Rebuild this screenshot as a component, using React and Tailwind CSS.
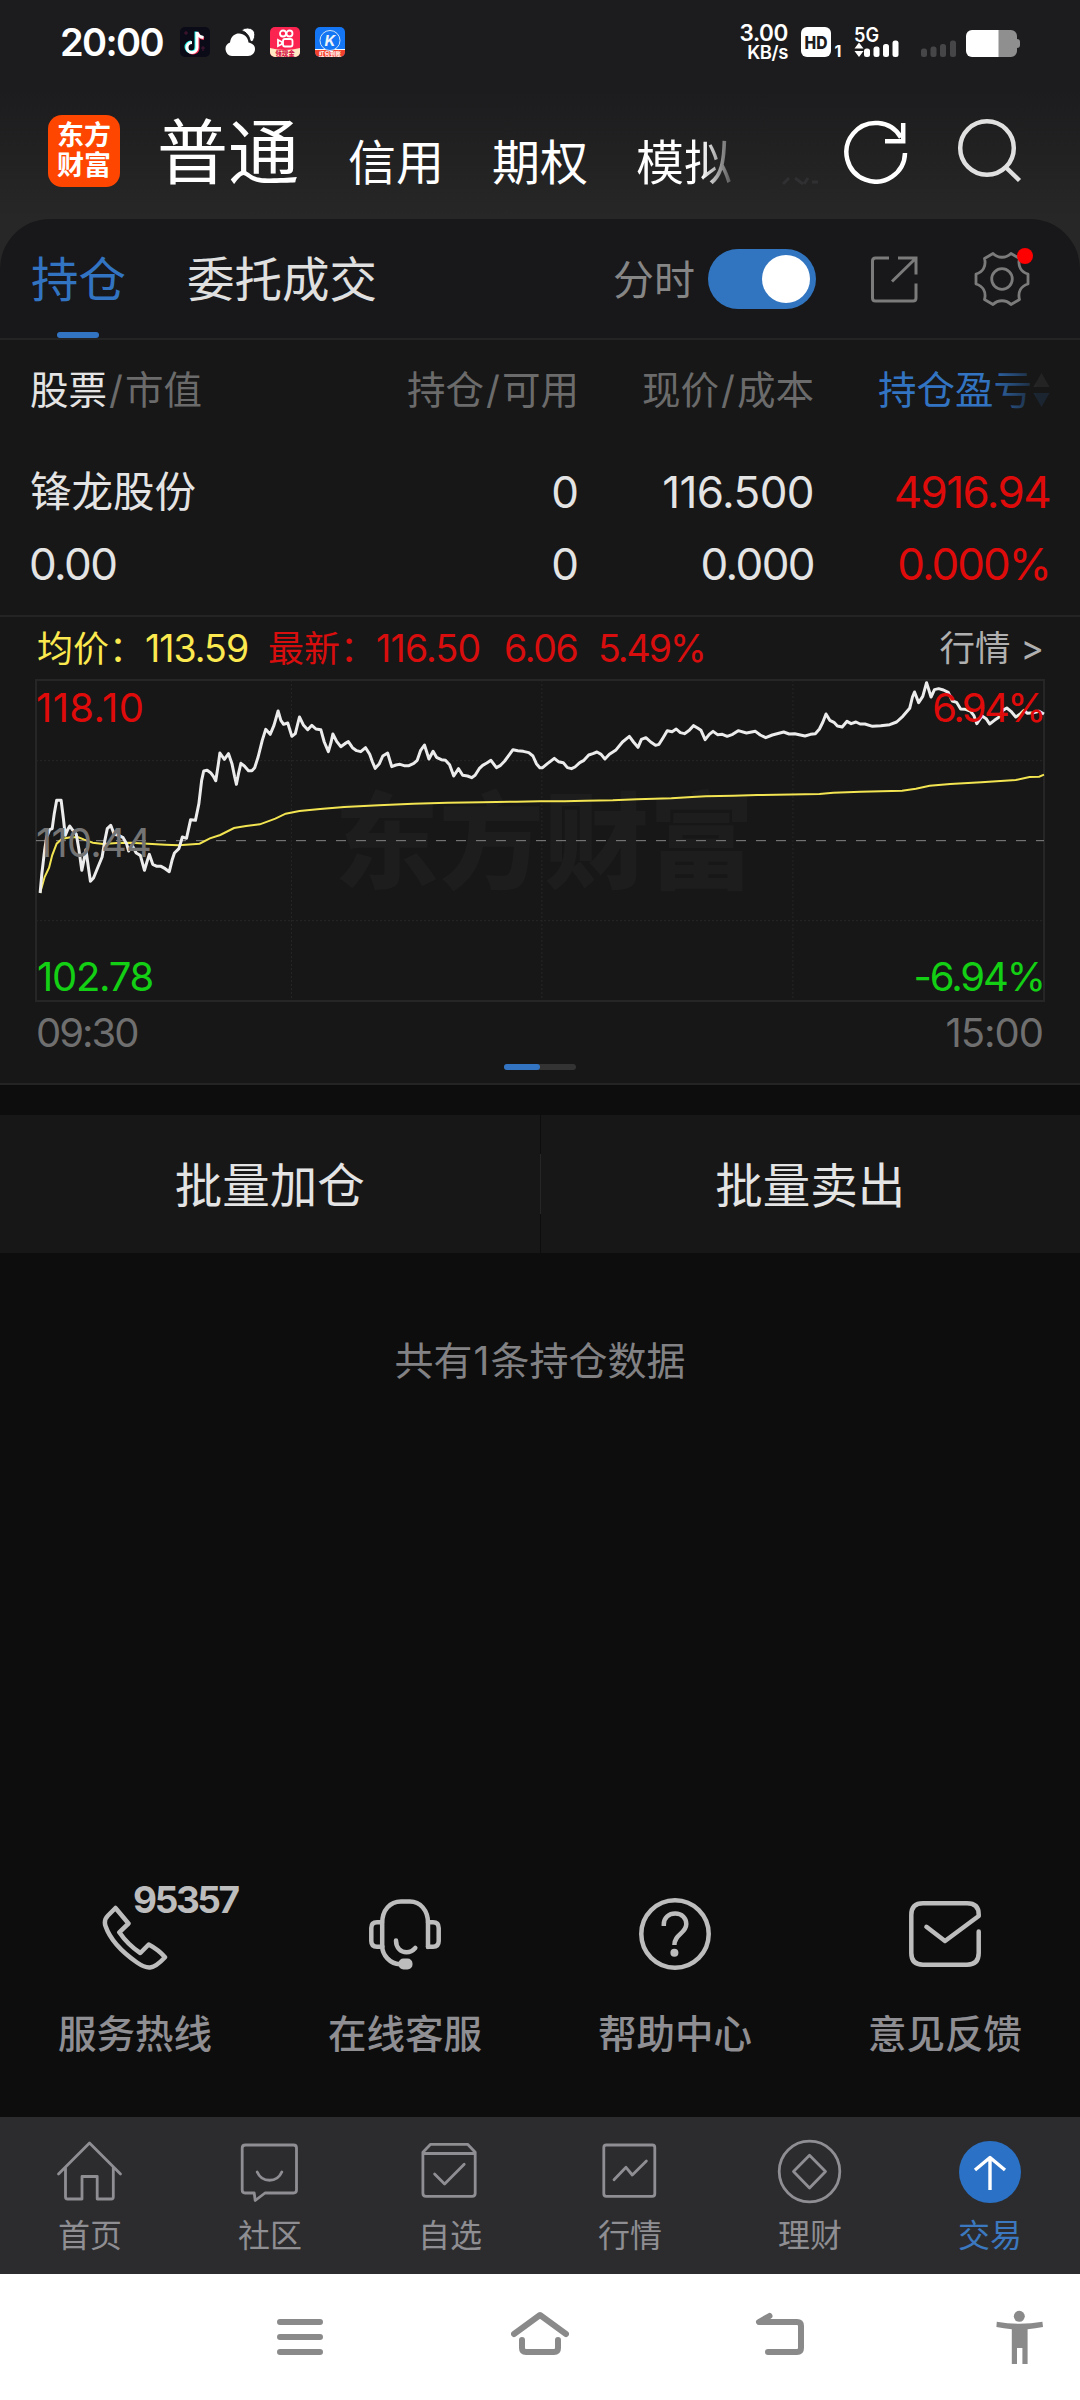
import React from "react";

const PRICE_LINE =
    "117,848 122,790 130,720 136,680 145,658 152,655 158,610 165,570 178,570 184,620 190,675 196,660 203,647 212,660 222,672 230,720 238,780 244,750 250,718 257,770 263,813 272,803 285,770 297,740 305,690 312,655 322,645 332,672 345,675 358,682 368,700 374,722 384,705 396,728 408,735 420,780 427,755 434,732 444,762 456,768 468,768 480,775 492,784 500,750 507,728 520,715 530,680 542,684 554,628 568,630 578,580 586,510 592,482 602,480 612,487 620,498 627,511 634,465 639,428 652,447 664,430 674,460 682,500 687,522 693,490 700,459 710,467 722,481 732,481 740,472 750,440 762,390 772,357 785,372 796,345 808,302 816,330 824,342 836,338 848,378 858,370 870,320 882,345 894,358 906,345 918,356 932,358 942,395 954,424 962,395 967,371 978,393 990,409 1002,400 1012,394 1024,412 1036,421 1048,424 1062,412 1074,432 1082,455 1090,474 1102,460 1112,437 1126,428 1138,469 1150,464 1162,462 1174,466 1188,466 1202,459 1212,450 1222,420 1233,404 1246,446 1258,423 1268,441 1282,448 1294,450 1306,463 1318,497 1332,475 1344,495 1358,497 1370,502 1380,495 1392,475 1402,465 1414,458 1426,450 1442,472 1454,465 1466,452 1478,435 1490,418 1504,421 1520,423 1536,427 1548,437 1558,460 1568,472 1576,472 1590,460 1610,444 1622,454 1636,457 1648,472 1660,475 1670,470 1684,457 1696,450 1710,434 1722,430 1734,425 1746,432 1757,446 1770,432 1788,420 1808,395 1828,378 1840,395 1853,411 1863,387 1876,382 1890,395 1904,405 1914,402 1926,382 1938,361 1952,364 1964,356 1976,367 1988,370 2002,360 2014,346 2026,353 2036,360 2048,388 2060,372 2071,363 2084,373 2098,372 2112,378 2128,372 2144,361 2168,368 2194,363 2208,374 2224,382 2243,374 2276,365 2292,371 2308,370 2338,377 2354,372 2368,370 2380,356 2390,335 2399,311 2410,330 2422,336 2432,347 2446,350 2460,333 2472,340 2486,335 2498,341 2512,341 2534,348 2558,346 2584,343 2604,335 2622,318 2642,294 2650,260 2656,245 2668,277 2680,258 2691,217 2704,260 2714,238 2726,235 2740,239 2754,246 2766,272 2778,276 2790,296 2804,297 2818,302 2828,315 2837,340 2852,317 2864,325 2874,341 2888,330 2902,320 2912,300 2924,293 2936,303 2950,320 2964,310 2974,300 2984,309 3000,307 3018,303 3032,311";

const AVG_LINE =
    "117,848 130,800 143,772 152,735 165,700 180,686 205,681 228,681 245,688 270,697 300,701 340,698 380,697 430,700 480,703 520,705 580,700 610,684 640,674 680,653 715,647 755,642 800,625 830,610 870,602 930,596 1000,590 1100,585 1200,580 1300,577 1400,576 1500,574 1568,573 1640,573 1700,571 1780,570 1850,567 1950,564 2010,560 2050,558 2130,556 2200,554 2380,551 2420,547 2500,544 2620,541 2660,535 2700,526 2760,521 2850,516 2950,509 2990,500 3018,499 3032,493";

const services = [
    {
        label: "服务热线",
        badge: "95357",
        icon: (
            <path d="M16.5 10 L29.5 25.5 L20.3 34.3 Q29 47 41.3 55 L49.7 46.5 Q60 52 66 59.3 Q57 69 51 69.5 Q46 70 38 64.5 Q13 47 6.5 28 Q4.5 22 9 17.5 Z" />
        ),
    },
    {
        label: "在线客服",
        icon: (
            <>
                <path d="M13.2 49 V25 C13.2 12 21 3.5 32 3.5 H41 C51 3.5 59 12 59 25 V49" />
                <path d="M13 24.3 H8 Q2.3 24.3 2.3 30 V43 Q2.3 48.7 8 48.7 H13 M59 24.3 H64 Q69.7 24.3 69.7 30 V43 Q69.7 48.7 64 48.7 H59" />
                <path d="M13.2 48 C13.2 57 21 66 31 66.3 M27 42.5 C27 50 32 54.3 37.5 54.3 Q42.5 54.3 46.3 50" />
                <rect x="29.5" y="60.5" width="14" height="11" rx="5" fill="currentColor" stroke="none" />
            </>
        ),
    },
    {
        label: "帮助中心",
        icon: (
            <>
                <circle cx="36" cy="36" r="33.7" />
                <path strokeLinecap="butt" d="M24.8 28 V26.5 C24.8 19.5 30 15.6 36.2 15.6 C43 15.6 47.3 20 47.3 26 C47.3 35.5 35.4 36 35.4 47" />
                <circle cx="35.4" cy="54.7" r="4" fill="currentColor" stroke="none" />
            </>
        ),
    },
    {
        label: "意见反馈",
        icon: (
            <path d="M17.4 28.8 L36 43 L69.7 18 V16.5 Q69.7 5.3 58 5.3 H14 Q2.3 5.3 2.3 17 V55 Q2.3 66.7 14 66.7 H58 Q69.7 66.7 69.7 55 V33.5" />
        ),
    },
];

const navItems = [
    {
        label: "首页",
        icon: <path d="M0.5 34 L31.5 3 L62.5 34 M7.5 27.5 V57 Q7.5 59 9.5 59 H24 V36.5 H39.2 V59 H53.3 Q55.3 59 55.3 57 V27.5" />,
    },
    {
        label: "社区",
        icon: (
            <path d="M7.5 5 H55.5 Q58.5 5 58.5 8 V50 Q58.5 53 55.5 53 H27 L17.2 60.5 L16.2 53 H7 Q4.2 53 4.2 50 V8 Q4.2 5 7.5 5 Z M19.2 32 C24 43 39 43 43.8 32" />
        ),
    },
    {
        label: "自选",
        icon: (
            <path d="M4.9 12.3 L12.6 4.3 H49.6 L57.2 12.3 V53.3 Q57.2 56.3 54.2 56.3 H7.9 Q4.9 56.3 4.9 53.3 Z M4.9 13.5 H57.2 M16.6 34 L26.6 44 L46.2 24.3" />
        ),
    },
    {
        label: "行情",
        icon: (
            <>
                <rect x="5.8" y="5" width="51" height="51.3" rx="2.5" />
                <path d="M16 39.7 L28 27.3 L34.3 35 L48.4 21" />
            </>
        ),
    },
    {
        label: "理财",
        icon: (
            <>
                <circle cx="31.5" cy="31.5" r="30.3" />
                <path d="M31.5 15.3 L47.5 31.5 L31.5 48 L15.5 31.5 Z" />
            </>
        ),
    },
    {
        label: "交易",
        active: true,
        icon: (
            <>
                <circle cx="32" cy="32" r="31" fill="#2b71c5" stroke="none" />
                <path d="M32 50 V17.5 M17 30 L32 17.5 L47 30" stroke="#fff" strokeWidth="3.4" strokeLinecap="butt" />
            </>
        ),
    },
];

function StatusBar() {
    return (
        <div className="flex h-[84px] items-center pr-[60px] pl-[60px] text-white">
            <span className="w-[120px] text-[38px] leading-none font-semibold tracking-[-1.6px]">20:00</span>
            <div className="flex gap-[15px]">
                {/* Douyin */}
                <svg width="30" height="30" viewBox="0 0 30 30">
                    <rect width="30" height="30" rx="5" fill="#0b0b18" />
                    <path d="M4 6h4M6 4v4M23 19v5M21 21h4" stroke="#4a1630" />
                    <g fill="none" strokeWidth="3">
                        <path d="M16 4.5V20a5 5 0 1 1-5-5M16 5c.7 3.500 3 5 7 5.500" stroke="#25f4ee" />
                        <path d="M18 6v15a5 5 0 0 1-8 4M18 6c.7 3.500 3 5 6 5.500" stroke="#fe2c55" />
                        <path d="M17 5v15.500a5 5 0 1 1-5-5M17 5c.7 3.500 3 5 6.500 5.500" stroke="#fff" />
                    </g>
                </svg>
                {/* Weather */}
                <svg width="30" height="30" viewBox="0 0 30 30" fill="#fff">
                    <path d="M7 29a7 7 0 0 1-2-13.500C6 9 10 6.500 14 6.500c5 0 9 3.500 9.500 9 3 .5 6.500 2.500 6.500 6.500 0 4-3 7-7 7z" />
                    <path d="M16.500 3.500C20 0 25 .5 28 3c3 3 2 9-1 12l-2-1.500C24.500 9 21.500 5 16.500 3.500z" stroke="#1c1c1e" strokeWidth="1" />
                </svg>
                {/* Kuaishou */}
                <svg width="30" height="30" viewBox="0 0 30 30">
                    <rect width="30" height="30" rx="5" fill="#fb2350" />
                    <path d="M0 21Q15 25 30 21V25a5 5 0 0 1-5 5H5a5 5 0 0 1-5-5z" fill="#ffe9c4" />
                    <g fill="none" stroke="#fff" strokeWidth="1.800">
                        <circle cx="13" cy="6.500" r="3" />
                        <circle cx="19.500" cy="6.500" r="3" />
                        <rect x="13" y="12" width="9.500" height="7.500" rx="2" />
                        <path d="M12 15l-4-2v6l4-2z" />
                    </g>
                    <text x="15" y="29" fontSize="6.500" fontWeight="900" textAnchor="middle" fill="#d3154a">领现金</text>
                </svg>
                {/* K app */}
                <svg width="30" height="30" viewBox="0 0 30 30">
                    <rect width="30" height="30" rx="5" fill="#1476f4" />
                    <path d="M0 23H30V25a5 5 0 0 1-5 5H5a5 5 0 0 1-5-5z" fill="#f2412c" />
                    <path d="M0 22.500H30" stroke="#fff" strokeWidth="1" />
                    <circle cx="15" cy="13.500" r="10" fill="#1476f4" stroke="#cfe2f5" strokeWidth="1" />
                    <text x="15" y="19" fontSize="15" fontWeight="700" fontStyle="italic" textAnchor="middle" fill="#eef3f8">K</text>
                    <text x="15" y="29" fontSize="5.500" fontWeight="700" textAnchor="middle" fill="#fff">红包到账</text>
                </svg>
            </div>
            <div className="ml-auto flex items-center">
                <div className="mr-[13px] flex flex-col items-end font-semibold">
                    <span className="text-[22.5px] leading-[20px] tracking-[-0.4px]">3.00</span>
                    <span className="text-[18.5px] leading-[18px] tracking-[-0.4px]">KB/s</span>
                </div>
                <svg width="219" height="36" viewBox="801 24 219 36" fill="#fff">
                    <rect x="801" y="27" width="30" height="30" rx="6" />
                    <text x="816" y="48.500" fontSize="18" fontWeight="800" textAnchor="middle" fill="#1c1c1e" textLength="23" lengthAdjust="spacingAndGlyphs">HD</text>
                    <text x="834.500" y="57" fontSize="16" fontWeight="700">1</text>
                    <text x="854" y="42" fontSize="20" fontWeight="600" textLength="25" lengthAdjust="spacingAndGlyphs">5G</text>
                    <path d="M854.500 48.500L859 42.500L863.500 48.500zM854.500 51L859 57L863.500 51z" />
                    <rect x="864" y="48.500" width="6" height="8.500" rx="2.500" />
                    <rect x="873.500" y="46.500" width="6" height="10.500" rx="2.500" />
                    <rect x="883" y="44" width="6" height="13" rx="2.500" />
                    <rect x="892.500" y="40.500" width="6" height="16.500" rx="2.500" />
                    <g fill="#464648">
                        <rect x="921" y="48.500" width="6" height="8.500" rx="2.500" />
                        <rect x="930.500" y="46.500" width="6" height="10.500" rx="2.500" />
                        <rect x="940" y="44" width="6" height="13" rx="2.500" />
                        <rect x="950" y="40.500" width="6" height="16.500" rx="2.500" />
                    </g>
                    <path d="M998 30h13a6 6 0 0 1 6 6v3q3 0 3 3v3q0 3-3 3v3a6 6 0 0 1-6 6h-13z" fill="#8f8f90" />
                    <path d="M972 30h26.500v27H972a6 6 0 0 1-6-6V36a6 6 0 0 1 6-6z" />
                </svg>
            </div>
        </div>
    );
}

function Header() {
    return (
        <div className="flex h-[135px] pl-[48px] text-white">
            <div className="mt-[31px] flex h-[72px] w-[72px] shrink-0 flex-col items-center justify-center rounded-[14px] bg-[#ff4600] text-[27px] leading-[30px] font-bold">
                <span>东方</span>
                <span>财富</span>
            </div>
            <div className="ml-[37px] flex h-[135px] w-[663px] items-start overflow-hidden whitespace-nowrap">
                <span className="mt-[33px] text-[71px] leading-none">普通</span>
                <span className="mt-[55px] ml-[49px] text-[48px] leading-none">信用</span>
                <span className="mt-[55px] ml-[48px] text-[48px] leading-none">期权</span>
                <span className="mt-[55px] ml-[48px] bg-[linear-gradient(90deg,#fff_68%,#555_100%)] bg-clip-text text-[48px] leading-none text-transparent">模拟</span>
                <svg className="mt-[92px] ml-[50px]" width="36" height="10" viewBox="0 0 36 10" fill="none" stroke="#303032" strokeWidth="3">
                    <path d="M1 8l6-6M13 2l8 6M22 8l4-6M30 6h6" />
                </svg>
            </div>
            <svg className="mt-[34px] ml-[23px]" width="66" height="66" viewBox="843 118 66 66" fill="none" stroke="#fff" strokeWidth="4.500">
                <path d="M905 153a29.300 29.300 0 1 1-4-15.500" />
                <path d="M903.200 123v18.200H885" />
            </svg>
            <svg className="mt-[34px] ml-[47px]" width="66" height="66" viewBox="956 118 66 66" fill="none" stroke="#e0e0e0" strokeWidth="4.500">
                <circle cx="987" cy="148" r="26.800" />
                <path d="M1005.500 167L1019.500 180.500" />
            </svg>
        </div>
    );
}

function TabRow() {
    return (
        <div className="flex h-[121px] items-center rounded-t-[50px] border-b-2 border-[#242424] bg-[#18181a] pl-[31px]">
            <div className="relative flex h-full items-center text-[47.500px] leading-none text-[#3274c2]">
                <span className="pt-[3px]">持仓</span>
                <span className="absolute bottom-0 left-[26px] h-[6px] w-[42px] rounded-[3px] bg-[#3274c2]" />
            </div>
            <span className="ml-[61px] pt-[3px] text-[47.5px] leading-none text-[#e0e0e0]">委托成交</span>
            <span className="ml-auto pt-[3px] text-[41px] leading-none text-[#868686]">分时</span>
            <div className="ml-[13px] flex h-[60px] w-[108px] items-center justify-end rounded-full bg-[#3175c1] pr-[6px]">
                <div className="h-[48px] w-[48px] rounded-full bg-white" />
            </div>
            <svg className="ml-[54px]" width="48" height="48" viewBox="870 255 48 48" fill="none" stroke="#7b7b7b" strokeWidth="3">
                <path d="M889 258h-13.500q-3 0-3 3v37q0 3 3 3h37.500q3 0 3-3v-14.500" />
                <path d="M898 258h18v16.500M914.500 259.500L892 281.500" />
            </svg>
            <div className="relative mr-[50px] ml-[56px]">
                <svg width="56" height="56" viewBox="-28 -28 56 56" fill="none" stroke="#7b7b7b" strokeWidth="2.800" strokeLinejoin="round">
                    <circle r="10.300" />
                    <path d="M-9 -25.500 C-4 -20.500 4 -20.500 9 -25.500 L17.500 -20.500 C15.500 -13 19 -7 26 -5 V5 C19 7 15.500 13 17.500 20.500 L9 25.500 C4 20.500 -4 20.500 -9 25.500 L-17.500 20.500 C-15.500 13 -19 7 -26 5 V-5 C-19 -7 -15.500 -13 -17.500 -20.500 Z" />
                </svg>
                <span className="absolute -top-[3px] right-[-3px] h-[16px] w-[16px] rounded-full bg-[#fe0000]" />
            </div>
        </div>
    );
}

const rowGrid = "grid grid-cols-[282px_268px_235px_1fr] items-center pr-[30px] pl-[29px]";

function Positions() {
    return (
        <div className="h-[277px] border-b-2 border-[#242424]">
            <div className={`${rowGrid} relative h-[100px] text-[38.5px] leading-none text-[#6b6b6b]`}>
                <span className="pl-px">
                    <span className="text-[#e4e4e4]">股票</span>
                    <span className="px-[2px]">/</span>市值
                </span>
                <span className="text-right">
                    持仓<span className="px-[2px]">/</span>可用
                </span>
                <span className="text-right">
                    现价<span className="px-[2px]">/</span>成本
                </span>
                <span className="flex items-center justify-end text-[#3274c2]">
                    持仓盈亏
                    <svg className="ml-[1px]" width="17" height="36" viewBox="0 0 17 36">
                        <path d="M8.500 1L16.500 15H0.500z" fill="#6b6b6b" />
                        <path d="M8.500 35L16.500 21H0.500z" fill="#3274c2" />
                    </svg>
                </span>
                <div className="absolute top-0 right-0 h-full w-[95px] bg-[linear-gradient(90deg,transparent,#171717_55%)] opacity-85" />
            </div>
            <div className={`${rowGrid} mt-[16px] h-[72px] text-[44px] leading-none text-[#e4e4e4]`}>
                <span className="pt-[2px] pl-px text-[41.5px]">锋龙股份</span>
                <span className="text-right">0</span>
                <span className="text-right tracking-[-0.6px]">116.500</span>
                <span className="text-right tracking-[-1.6px] text-[#df0b0b]">4916.94</span>
            </div>
            <div className={`${rowGrid} h-[72px] text-[44px] leading-none tracking-[-1.6px] text-[#e4e4e4]`}>
                <span>0.00</span>
                <span className="text-right tracking-normal">0</span>
                <span className="text-right">0.000</span>
                <span className="text-right tracking-[-2px] text-[#df0b0b]">0.000%</span>
            </div>
        </div>
    );
}

function MinuteChart() {
    return (
        <div className="h-[468px] border-b-2 border-[#242424] px-[36px]">
            <div className="flex h-[63px] items-center pt-px text-[36px] leading-none whitespace-nowrap">
                <span className="flex w-[232px] items-center pl-px text-[#fbe94f]">
                    均价：<span className="text-[37.500px] tracking-[-1px]">113.59</span>
                </span>
                <span className="flex w-[236px] items-center text-[#d80e0e]">
                    最新：<span className="text-[37.500px] tracking-[-0.8px]">116.50</span>
                </span>
                <span className="w-[94px] text-[37.500px] tracking-[-1.3px] text-[#d80e0e]">6.06</span>
                <span className="text-[37.500px] tracking-[-2px] text-[#d80e0e]">5.49%</span>
                <span className="ml-auto text-[35.500px] text-[#b0b0b0]">行情 &gt;</span>
            </div>
            <div className="relative h-[322px] text-[40px] leading-none">
                <div className="absolute inset-0 flex items-center justify-center pl-[8px] text-[105px] font-black text-[#1d1d1d]">东方财富</div>
                <svg className="absolute inset-0 overflow-visible" width="1008" height="321" viewBox="105 209 2927 963" preserveAspectRatio="none" fill="none">
                    <g stroke="#262626" strokeWidth="2">
                        <rect x="105" y="209" width="2927" height="963" vectorEffect="non-scaling-stroke" />
                        <path d="M847 209V1172M1574 209V1172M2303 209V1172M105 451H3032M105 931H3032" strokeWidth="1" strokeDasharray="2 2" vectorEffect="non-scaling-stroke" />
                    </g>
                    <path d="M105 691H3032" stroke="#858585" strokeWidth="1" strokeDasharray="10 10" vectorEffect="non-scaling-stroke" />
                    <polyline points={AVG_LINE} stroke="#f3e552" strokeWidth="2" vectorEffect="non-scaling-stroke" />
                    <polyline points={PRICE_LINE} stroke="#ececec" strokeWidth="3" strokeLinejoin="round" vectorEffect="non-scaling-stroke" />
                </svg>
                <div className="absolute inset-0 flex flex-col justify-between pt-[8px] pb-[5px]">
                    <div className="flex justify-between text-[#df0b0b]">
                        <span className="tracking-[0.4px]">118.10</span>
                        <span className="tracking-[-2.6px]">6.94%</span>
                    </div>
                    <span className="tracking-[-0.8px] text-[#747474]">110.44</span>
                    <div className="flex justify-between text-[#14d014]">
                        <span className="pl-px tracking-[-1.3px]">102.78</span>
                        <span className="tracking-[-2.1px]">-6.94%</span>
                    </div>
                </div>
            </div>
            <div className="flex h-[62px] items-center justify-between pr-px text-[40px] leading-none text-[#6f6f6f]">
                <span className="tracking-[-2px]">09:30</span>
                <span className="tracking-[-1px]">15:00</span>
            </div>
            <div className="mx-auto flex h-[6px] w-[72px] rounded-full bg-[#333]">
                <div className="h-full w-1/2 rounded-full bg-[#3274c2]" />
            </div>
        </div>
    );
}

function Services() {
    return (
        <div className="grid grid-cols-4">
            {services.map((item) => (
                <div key={item.label} className="relative flex flex-col items-center">
                    <svg className="text-[#bdbdbd]" width="72" height="72" viewBox="0 0 72 72" fill="none" stroke="currentColor" strokeWidth="4.500" strokeLinecap="round" strokeLinejoin="round">
                        {item.icon}
                    </svg>
                    {item.badge && (
                        <span className="absolute top-[-17px] left-[133px] text-[37px] leading-none font-bold tracking-[-2.4px] text-[#bdbdbd]">{item.badge}</span>
                    )}
                    <span className="mt-[45px] text-[38.500px] leading-none font-medium text-[#8e8e93]">{item.label}</span>
                </div>
            ))}
        </div>
    );
}

function BottomNav() {
    return (
        <div className="grid h-[157px] grid-cols-6 bg-[#2c2c2e] pt-[23px]">
            {navItems.map((item) => (
                <div key={item.label} className="flex flex-col items-center">
                    <svg className="overflow-visible" width="64" height="64" viewBox="0 0 64 64" fill="none" stroke="#8e8e93" strokeWidth="2.800" strokeLinejoin="round" strokeLinecap="round">
                        {item.icon}
                    </svg>
                    <span className={`mt-[16px] text-[32px] leading-none ${item.active ? "text-[#3b78bf]" : "text-[#8e8e93]"}`}>{item.label}</span>
                </div>
            ))}
        </div>
    );
}

function SystemBar() {
    return (
        <div className="flex h-[126px] items-center bg-white pl-[277px] text-[#8a8a8a]">
            <svg width="46" height="60" viewBox="277 2307 46 60" fill="none" stroke="currentColor" strokeWidth="6" strokeLinecap="round">
                <path d="M280 2322h40M280 2337h40M280 2352h40" />
            </svg>
            <svg className="ml-[188px]" width="58" height="60" viewBox="511 2307 58 60" fill="none" stroke="currentColor" strokeWidth="6" strokeLinecap="round" strokeLinejoin="round">
                <path d="M514 2334L540 2315L566 2334M522 2340v8q0 4 4 4h28q4 0 4-4v-8" />
            </svg>
            <svg className="ml-[186px]" width="50" height="60" viewBox="755 2307 50 60" fill="none" stroke="currentColor" strokeWidth="6" strokeLinecap="round" strokeLinejoin="round">
                <path d="M769.500 2316L759 2322H797q4 0 4 4v22q0 4-4 4H768" />
            </svg>
            <svg className="ml-[191px]" width="47" height="60" viewBox="996 2307 47 60" fill="currentColor">
                <circle cx="1019.300" cy="2316.300" r="5.500" />
                <path d="M996.800 2321.800q22.500 4 45.600 0l.6 5.200q-7.500 1.600-15.400 2.300v34.700h-5.200v-16h-5.400v16h-5.200v-34.700q-8-.7-15.400-2.300z" />
            </svg>
        </div>
    );
}

export default function App() {
    return (
        <div className="flex h-[2400px] w-[1080px] flex-col overflow-hidden bg-[#0d0d0d] font-['Inter','Noto_Sans_CJK_SC',sans-serif]">
            <div className="bg-[linear-gradient(180deg,#1c1c1e_0px,#1c1c1e_90px,#272727_219px)]">
                <StatusBar />
                <Header />
                <TabRow />
            </div>
            <div className="bg-[#171717]">
                <Positions />
                <MinuteChart />
            </div>
            <div className="mt-[30px] flex h-[138px] text-[47.500px] leading-none text-[#e4e4e4]">
                <span className="flex flex-1 items-center justify-center bg-[#171717] pt-[3px]">批量加仓</span>
                <span className="my-[39px] w-px bg-[#262626]" />
                <span className="flex flex-1 items-center justify-center bg-[#171717] pt-[3px]">批量卖出</span>
            </div>
            <p className="mt-[88px] text-center text-[39px] leading-none text-[#828285]">
                共有<span className="px-px">1</span>条持仓数据
            </p>
            <div className="mt-auto pb-[64px]">
                <Services />
            </div>
            <BottomNav />
            <SystemBar />
        </div>
    );
}
